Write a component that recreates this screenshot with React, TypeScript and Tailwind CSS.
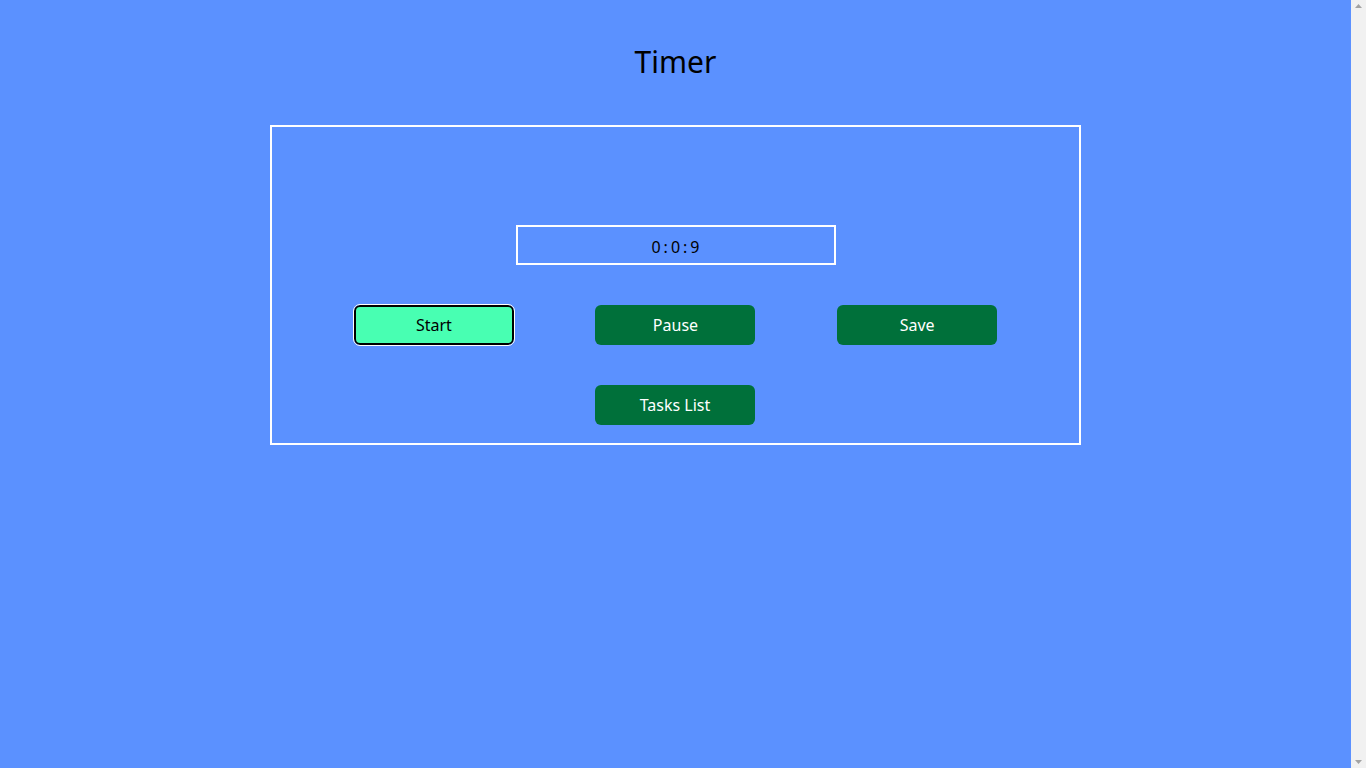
export default function App() {
    return (
        <div className="flex h-screen bg-[#5b91ff] font-['Noto_Sans',sans-serif] text-black">
            <div className="flex flex-1 flex-col items-center">
                <h1 className="mt-[42px] text-[30px] leading-[40px]">Timer</h1>
                <div className="mt-[43px] flex w-[60%] flex-col items-center border-2 border-white pt-[98px] pb-[18px]">
                    <div className="flex h-10 w-80 items-center justify-center border-2 border-white pt-[3px] pl-[3px] tracking-[3px]">
                        0:0:9
                    </div>
                    <div className="mt-10 flex w-full justify-evenly">
                        <button className="h-10 w-40 rounded-md border-2 border-black bg-[#48ffb2] outline-1 outline-white">
                            Start
                        </button>
                        <button className="h-10 w-40 rounded-md bg-[#00703a] text-white">Pause</button>
                        <button className="h-10 w-40 rounded-md bg-[#00703a] text-white">Save</button>
                    </div>
                    <button className="mt-10 mr-[1px] h-10 w-40 rounded-md bg-[#00703a] text-white">Tasks List</button>
                </div>
            </div>
            {/* browser scrollbar strip */}
            <div className="flex w-[15px] flex-col items-center justify-between bg-[#f1f1f1] py-[4px] text-[#a3a3a3]">
                <svg width="7" height="4" viewBox="0 0 7 4" fill="currentColor">
                    <path d="M3.5 0L7 4H0z" />
                </svg>
                <svg width="7" height="4" viewBox="0 0 7 4" fill="currentColor">
                    <path d="M0 0h7L3.5 4z" />
                </svg>
            </div>
        </div>
    );
}
